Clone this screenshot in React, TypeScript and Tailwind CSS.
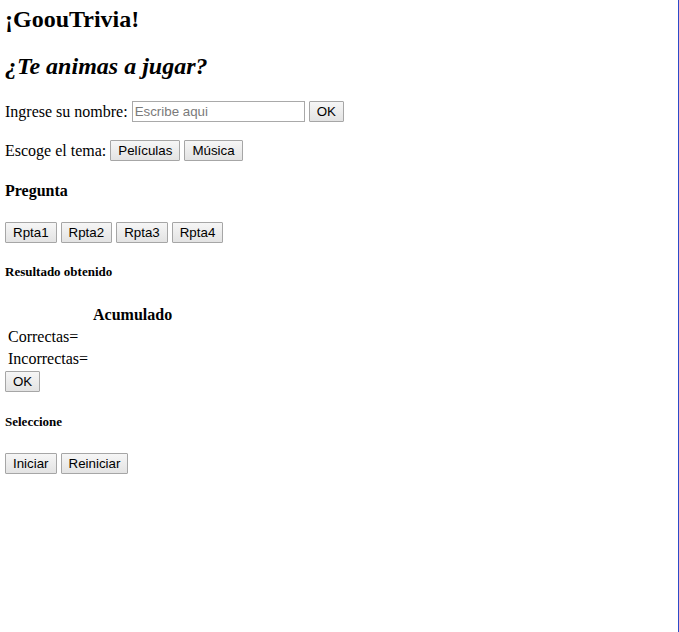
import React from "react";

const serif = { fontFamily: '"Liberation Serif", "Times New Roman", serif' };

function Btn({ children }: { children: React.ReactNode }) {
  return (
    <button
      className="h-[21px] px-[7px] border border-[#a6a6a6] rounded-[1px] bg-gradient-to-b from-[#f6f6f6] to-[#e3e3e3] text-[13.33px] leading-none text-black"
      style={{ fontFamily: '"Liberation Sans", Arial, sans-serif' }}
    >
      {children}
    </button>
  );
}

export default function App() {
  return (
    <div
      className="w-[679px] h-[632px] bg-white text-black border-r border-[#2d4bc9] px-[5px] pt-[5px]"
      style={serif}
    >
      {/* Titles */}
      <h1 className="text-[24px] leading-[28px] font-bold">¡GoouTrivia!</h1>
      <h2 className="mt-[19px] text-[24px] leading-[28px] font-bold italic">
        ¿Te animas a jugar?
      </h2>

      {/* Name */}
      <div className="mt-[21px] flex items-center h-[21px] gap-[4px] text-[16px]">
        <span>Ingrese su nombre:</span>
        <input
          placeholder="Escribe aqui"
          className="w-[173px] h-[21px] border border-[#a9a9a9] px-[2px] text-[13.33px] placeholder:text-[#7a7a7a] outline-none"
          style={{ fontFamily: '"Liberation Sans", Arial, sans-serif' }}
        />
        <Btn>OK</Btn>
      </div>

      {/* Theme */}
      <div className="mt-[18px] flex items-center h-[21px] gap-[4px] text-[16px]">
        <span>Escoge el tema:</span>
        <Btn>Películas</Btn>
        <Btn>Música</Btn>
      </div>

      <h4 className="mt-[21px] text-[16px] leading-[18px] font-bold">Pregunta</h4>

      <div className="mt-[22px] flex gap-[4px]">
        <Btn>Rpta1</Btn>
        <Btn>Rpta2</Btn>
        <Btn>Rpta3</Btn>
        <Btn>Rpta4</Btn>
      </div>

      <h5 className="mt-[21px] text-[13px] leading-[16px] font-bold">
        Resultado obtenido
      </h5>

      {/* Accumulated table */}
      <div className="mt-[24px] text-[16px] leading-[22px]">
        <div className="pl-[88px] font-bold">Acumulado</div>
        <div className="pl-[3px]">Correctas=</div>
        <div className="pl-[3px]">Incorrectas=</div>
      </div>
      <div className="-mt-[1px]">
        <Btn>OK</Btn>
      </div>

      <h5 className="mt-[21px] text-[13px] leading-[16px] font-bold">Seleccione</h5>

      <div className="mt-[23px] flex gap-[4px]">
        <Btn>Iniciar</Btn>
        <Btn>Reiniciar</Btn>
      </div>
    </div>
  );
}
